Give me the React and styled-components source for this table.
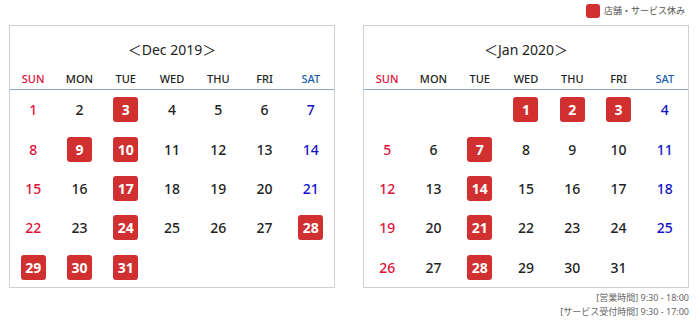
import React from "react";
import styled, { createGlobalStyle } from "styled-components";

const GlobalStyle = createGlobalStyle`
  body {
    margin: 0;
    background: #fff;
    font-family: "Noto Sans", "Noto Sans CJK JP", sans-serif;
  }
`;

const Page = styled.div`
  width: 700px;
  height: 325px;
  box-sizing: border-box;
  padding: 0 11px 0 9px;
`;

const Legend = styled.div`
  height: 25px;
  display: flex;
  justify-content: flex-end;
  align-items: center;
  gap: 4px;
  padding: 0 4px 4px 0;
  box-sizing: border-box;
  font-size: 9px;
  color: #555;
`;

const Swatch = styled.span`
  width: 14px;
  height: 14px;
  border-radius: 3px;
  background: #d03030;
`;

const Calendars = styled.div`
  display: flex;
  gap: 28px;
`;

const Month = styled.div`
  width: 326px;
  height: 263px;
  box-sizing: border-box;
  border: 1px solid #d0d0d0;
  display: flex;
  flex-direction: column;
`;

const Title = styled.div`
  padding-top: 13px;
  line-height: 22px;
  text-align: center;
  font-size: 14px;
  color: #222;
`;

const Week = styled.div`
  display: grid;
  grid-template-columns: repeat(7, 1fr);
  margin-top: 8px;
  height: 20px;
  border-bottom: 1px solid #8fa8c6;
`;

const DayName = styled.div`
  text-align: center;
  font-size: 11px;
  font-weight: 500;
  line-height: 20px;
  color: ${(p) => (p.$col === 0 ? "#e0103a" : p.$col === 6 ? "#1a5fb0" : "#222")};
`;

const Grid = styled.div`
  flex: 1;
  display: grid;
  grid-template-columns: repeat(7, 1fr);
  grid-template-rows: repeat(5, 1fr);
`;

const Cell = styled.div`
  display: flex;
  align-items: center;
  justify-content: center;
`;

const Num = styled.span`
  width: 25px;
  height: 25px;
  border-radius: 3px;
  display: flex;
  align-items: center;
  justify-content: center;
  font-size: 14px;
  font-weight: ${(p) => (p.$off ? 700 : 500)};
  background: ${(p) => (p.$off ? "#d03030" : "transparent")};
  color: ${(p) =>
    p.$off ? "#fff" : p.$col === 0 ? "#e0103a" : p.$col === 6 ? "#1212c8" : "#222"};
`;

const Footer = styled.div`
  margin-top: 3px;
  text-align: right;
  font-size: 9px;
  line-height: 14px;
  color: #666;
`;

const DAYS = ["SUN", "MON", "TUE", "WED", "THU", "FRI", "SAT"];

const months = [
  { title: "Dec 2019", start: 0, len: 31, off: [3, 9, 10, 17, 24, 28, 29, 30, 31] },
  { title: "Jan 2020", start: 3, len: 31, off: [1, 2, 3, 7, 14, 21, 28] },
];

function MonthView({ m }) {
  const cells = [];
  for (let i = 0; i < m.start; i++) cells.push(null);
  for (let d = 1; d <= m.len; d++) cells.push(d);
  return (
    <Month>
      <Title>＜{m.title}＞</Title>
      <Week>
        {DAYS.map((d, i) => (
          <DayName key={d} $col={i}>{d}</DayName>
        ))}
      </Week>
      <Grid>
        {cells.map((d, i) => (
          <Cell key={i}>
            {d && (
              <Num $col={i % 7} $off={m.off.includes(d)}>
                {d}
              </Num>
            )}
          </Cell>
        ))}
      </Grid>
    </Month>
  );
}

export default function App() {
  return (
    <Page>
      <GlobalStyle />
      <Legend>
        <Swatch />
        店舗・サービス休み
      </Legend>
      <Calendars>
        {months.map((m) => (
          <MonthView key={m.title} m={m} />
        ))}
      </Calendars>
      <Footer>
        [営業時間] 9:30 - 18:00
        <br />
        [サービス受付時間] 9:30 - 17:00
      </Footer>
    </Page>
  );
}
